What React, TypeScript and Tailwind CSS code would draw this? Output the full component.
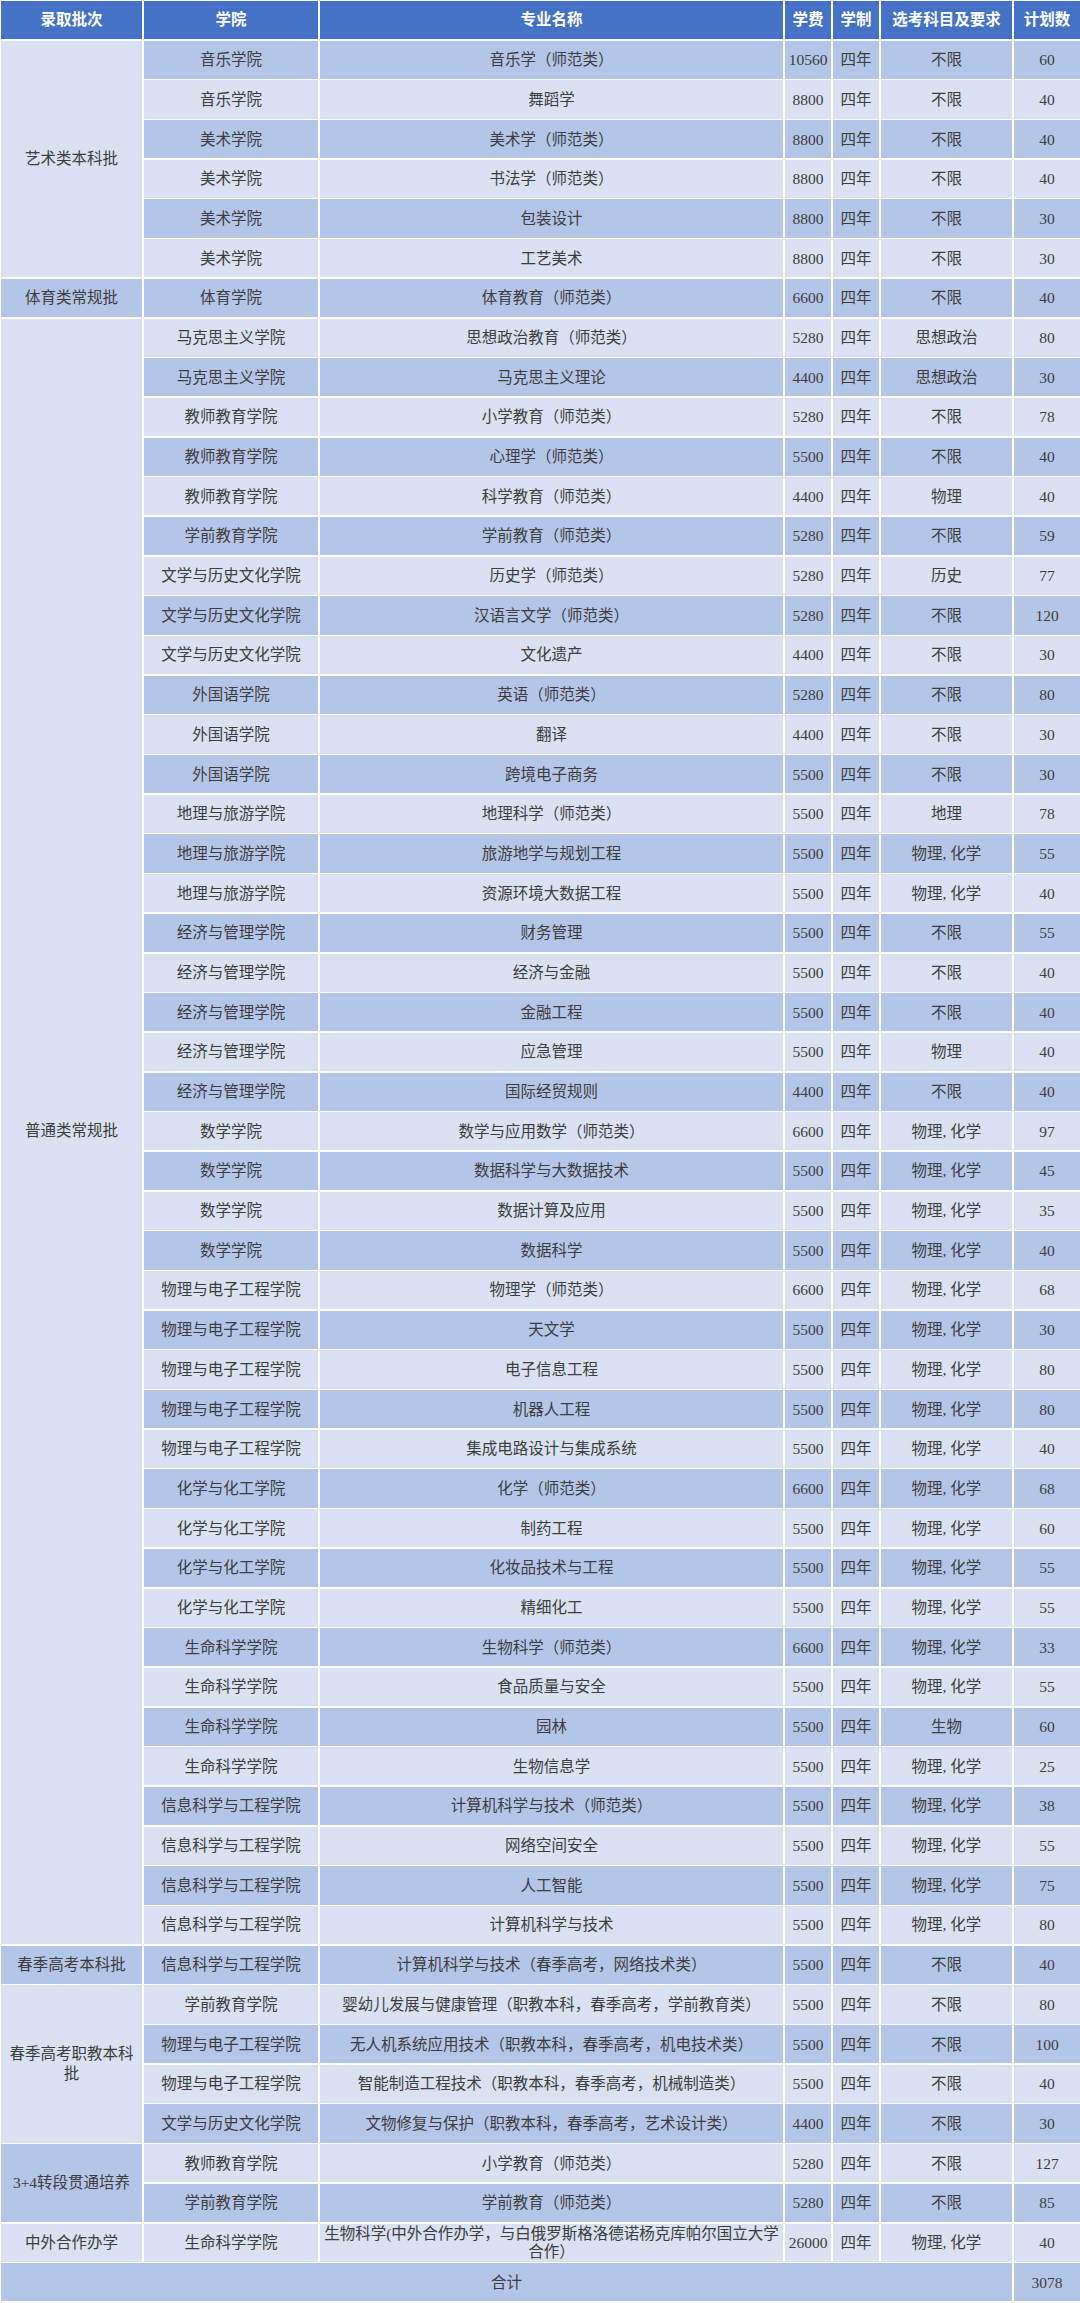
import React from "react";

type Row = [string, string, string, string, string, string];

interface Group {
  name: React.ReactNode;
  rows: Row[];
}

const PC = "物理, 化学";

const groups: Group[] = [
  {
    name: "艺术类本科批",
    rows: [
      ["音乐学院", "音乐学（师范类）", "10560", "四年", "不限", "60"],
      ["音乐学院", "舞蹈学", "8800", "四年", "不限", "40"],
      ["美术学院", "美术学（师范类）", "8800", "四年", "不限", "40"],
      ["美术学院", "书法学（师范类）", "8800", "四年", "不限", "40"],
      ["美术学院", "包装设计", "8800", "四年", "不限", "30"],
      ["美术学院", "工艺美术", "8800", "四年", "不限", "30"],
    ],
  },
  {
    name: "体育类常规批",
    rows: [["体育学院", "体育教育（师范类）", "6600", "四年", "不限", "40"]],
  },
  {
    name: "普通类常规批",
    rows: [
      ["马克思主义学院", "思想政治教育（师范类）", "5280", "四年", "思想政治", "80"],
      ["马克思主义学院", "马克思主义理论", "4400", "四年", "思想政治", "30"],
      ["教师教育学院", "小学教育（师范类）", "5280", "四年", "不限", "78"],
      ["教师教育学院", "心理学（师范类）", "5500", "四年", "不限", "40"],
      ["教师教育学院", "科学教育（师范类）", "4400", "四年", "物理", "40"],
      ["学前教育学院", "学前教育（师范类）", "5280", "四年", "不限", "59"],
      ["文学与历史文化学院", "历史学（师范类）", "5280", "四年", "历史", "77"],
      ["文学与历史文化学院", "汉语言文学（师范类）", "5280", "四年", "不限", "120"],
      ["文学与历史文化学院", "文化遗产", "4400", "四年", "不限", "30"],
      ["外国语学院", "英语（师范类）", "5280", "四年", "不限", "80"],
      ["外国语学院", "翻译", "4400", "四年", "不限", "30"],
      ["外国语学院", "跨境电子商务", "5500", "四年", "不限", "30"],
      ["地理与旅游学院", "地理科学（师范类）", "5500", "四年", "地理", "78"],
      ["地理与旅游学院", "旅游地学与规划工程", "5500", "四年", PC, "55"],
      ["地理与旅游学院", "资源环境大数据工程", "5500", "四年", PC, "40"],
      ["经济与管理学院", "财务管理", "5500", "四年", "不限", "55"],
      ["经济与管理学院", "经济与金融", "5500", "四年", "不限", "40"],
      ["经济与管理学院", "金融工程", "5500", "四年", "不限", "40"],
      ["经济与管理学院", "应急管理", "5500", "四年", "物理", "40"],
      ["经济与管理学院", "国际经贸规则", "4400", "四年", "不限", "40"],
      ["数学学院", "数学与应用数学（师范类）", "6600", "四年", PC, "97"],
      ["数学学院", "数据科学与大数据技术", "5500", "四年", PC, "45"],
      ["数学学院", "数据计算及应用", "5500", "四年", PC, "35"],
      ["数学学院", "数据科学", "5500", "四年", PC, "40"],
      ["物理与电子工程学院", "物理学（师范类）", "6600", "四年", PC, "68"],
      ["物理与电子工程学院", "天文学", "5500", "四年", PC, "30"],
      ["物理与电子工程学院", "电子信息工程", "5500", "四年", PC, "80"],
      ["物理与电子工程学院", "机器人工程", "5500", "四年", PC, "80"],
      ["物理与电子工程学院", "集成电路设计与集成系统", "5500", "四年", PC, "40"],
      ["化学与化工学院", "化学（师范类）", "6600", "四年", PC, "68"],
      ["化学与化工学院", "制药工程", "5500", "四年", PC, "60"],
      ["化学与化工学院", "化妆品技术与工程", "5500", "四年", PC, "55"],
      ["化学与化工学院", "精细化工", "5500", "四年", PC, "55"],
      ["生命科学学院", "生物科学（师范类）", "6600", "四年", PC, "33"],
      ["生命科学学院", "食品质量与安全", "5500", "四年", PC, "55"],
      ["生命科学学院", "园林", "5500", "四年", "生物", "60"],
      ["生命科学学院", "生物信息学", "5500", "四年", PC, "25"],
      ["信息科学与工程学院", "计算机科学与技术（师范类）", "5500", "四年", PC, "38"],
      ["信息科学与工程学院", "网络空间安全", "5500", "四年", PC, "55"],
      ["信息科学与工程学院", "人工智能", "5500", "四年", PC, "75"],
      ["信息科学与工程学院", "计算机科学与技术", "5500", "四年", PC, "80"],
    ],
  },
  {
    name: "春季高考本科批",
    rows: [
      ["信息科学与工程学院", "计算机科学与技术（春季高考，网络技术类）", "5500", "四年", "不限", "40"],
    ],
  },
  {
    name: (
      <>
        春季高考职教本科
        <br />
        批
      </>
    ),
    rows: [
      ["学前教育学院", "婴幼儿发展与健康管理（职教本科，春季高考，学前教育类）", "5500", "四年", "不限", "80"],
      ["物理与电子工程学院", "无人机系统应用技术（职教本科，春季高考，机电技术类）", "5500", "四年", "不限", "100"],
      ["物理与电子工程学院", "智能制造工程技术（职教本科，春季高考，机械制造类）", "5500", "四年", "不限", "40"],
      ["文学与历史文化学院", "文物修复与保护（职教本科，春季高考，艺术设计类）", "4400", "四年", "不限", "30"],
    ],
  },
  {
    name: "3+4转段贯通培养",
    rows: [
      ["教师教育学院", "小学教育（师范类）", "5280", "四年", "不限", "127"],
      ["学前教育学院", "学前教育（师范类）", "5280", "四年", "不限", "85"],
    ],
  },
  {
    name: "中外合作办学",
    rows: [["生命科学学院", "SPECIAL", "26000", "四年", PC, "40"]],
  },
];

const headers = ["学院", "专业名称", "学费", "学制", "选考科目及要求", "计划数"];

const DARK = "bg-[#b4c6e7]";
const LIGHT = "bg-[#d9e1f2]";
const cell = "flex items-center justify-center text-center";
const rowCols = "grid grid-cols-[174px_463px_46px_46px_131px_1fr] gap-x-[2px] h-[38.2px]";

export default function App() {
  let rowIndex = 0;

  return (
    <div className="w-[1080px] min-h-[2303px] bg-white pl-[1px] pt-[1px] font-['Liberation_Serif','Noto_Sans_CJK_SC',serif] text-[15.5px] text-[#3d3d3d]">
      <div className="flex flex-col gap-y-[1.5px]">
        {/* Header */}
        <div className="grid grid-cols-[141px_174px_463px_46px_46px_131px_1fr] gap-x-[2px] h-[38.2px] font-bold text-white">
          <div className={`${cell} bg-[#4472c4]`}>录取批次</div>
          {headers.map((h) => (
            <div key={h} className={`${cell} bg-[#4472c4] whitespace-nowrap`}>
              {h}
            </div>
          ))}
        </div>

        {groups.map((group, gi) => (
          <div key={gi} className="flex gap-x-[2px]">
            <div className={`${cell} w-[141px] shrink-0 leading-[20px] ${gi % 2 === 0 ? LIGHT : DARK}`}>
              {group.name}
            </div>
            <div className="flex flex-1 flex-col gap-y-[1.5px]">
              {group.rows.map((row, ri) => {
                const bg = rowIndex++ % 2 === 0 ? DARK : LIGHT;
                return (
                  <div key={ri} className={rowCols}>
                    {row.map((v, ci) => (
                      <div key={ci} className={`${cell} ${bg} whitespace-nowrap`}>
                        {v === "SPECIAL" ? (
                          <span className="leading-[18px]">
                            生物科学(中外合作办学，与白俄罗斯格洛德诺杨克库帕尔国立大学
                            <br />
                            合作）
                          </span>
                        ) : (
                          v
                        )}
                      </div>
                    ))}
                  </div>
                );
              })}
            </div>
          </div>
        ))}

        {/* Total */}
        <div className="grid grid-cols-[1fr_66px] gap-x-[2px] h-[38.2px]">
          <div className={`${cell} ${DARK}`}>合计</div>
          <div className={`${cell} ${DARK}`}>3078</div>
        </div>
      </div>
    </div>
  );
}
